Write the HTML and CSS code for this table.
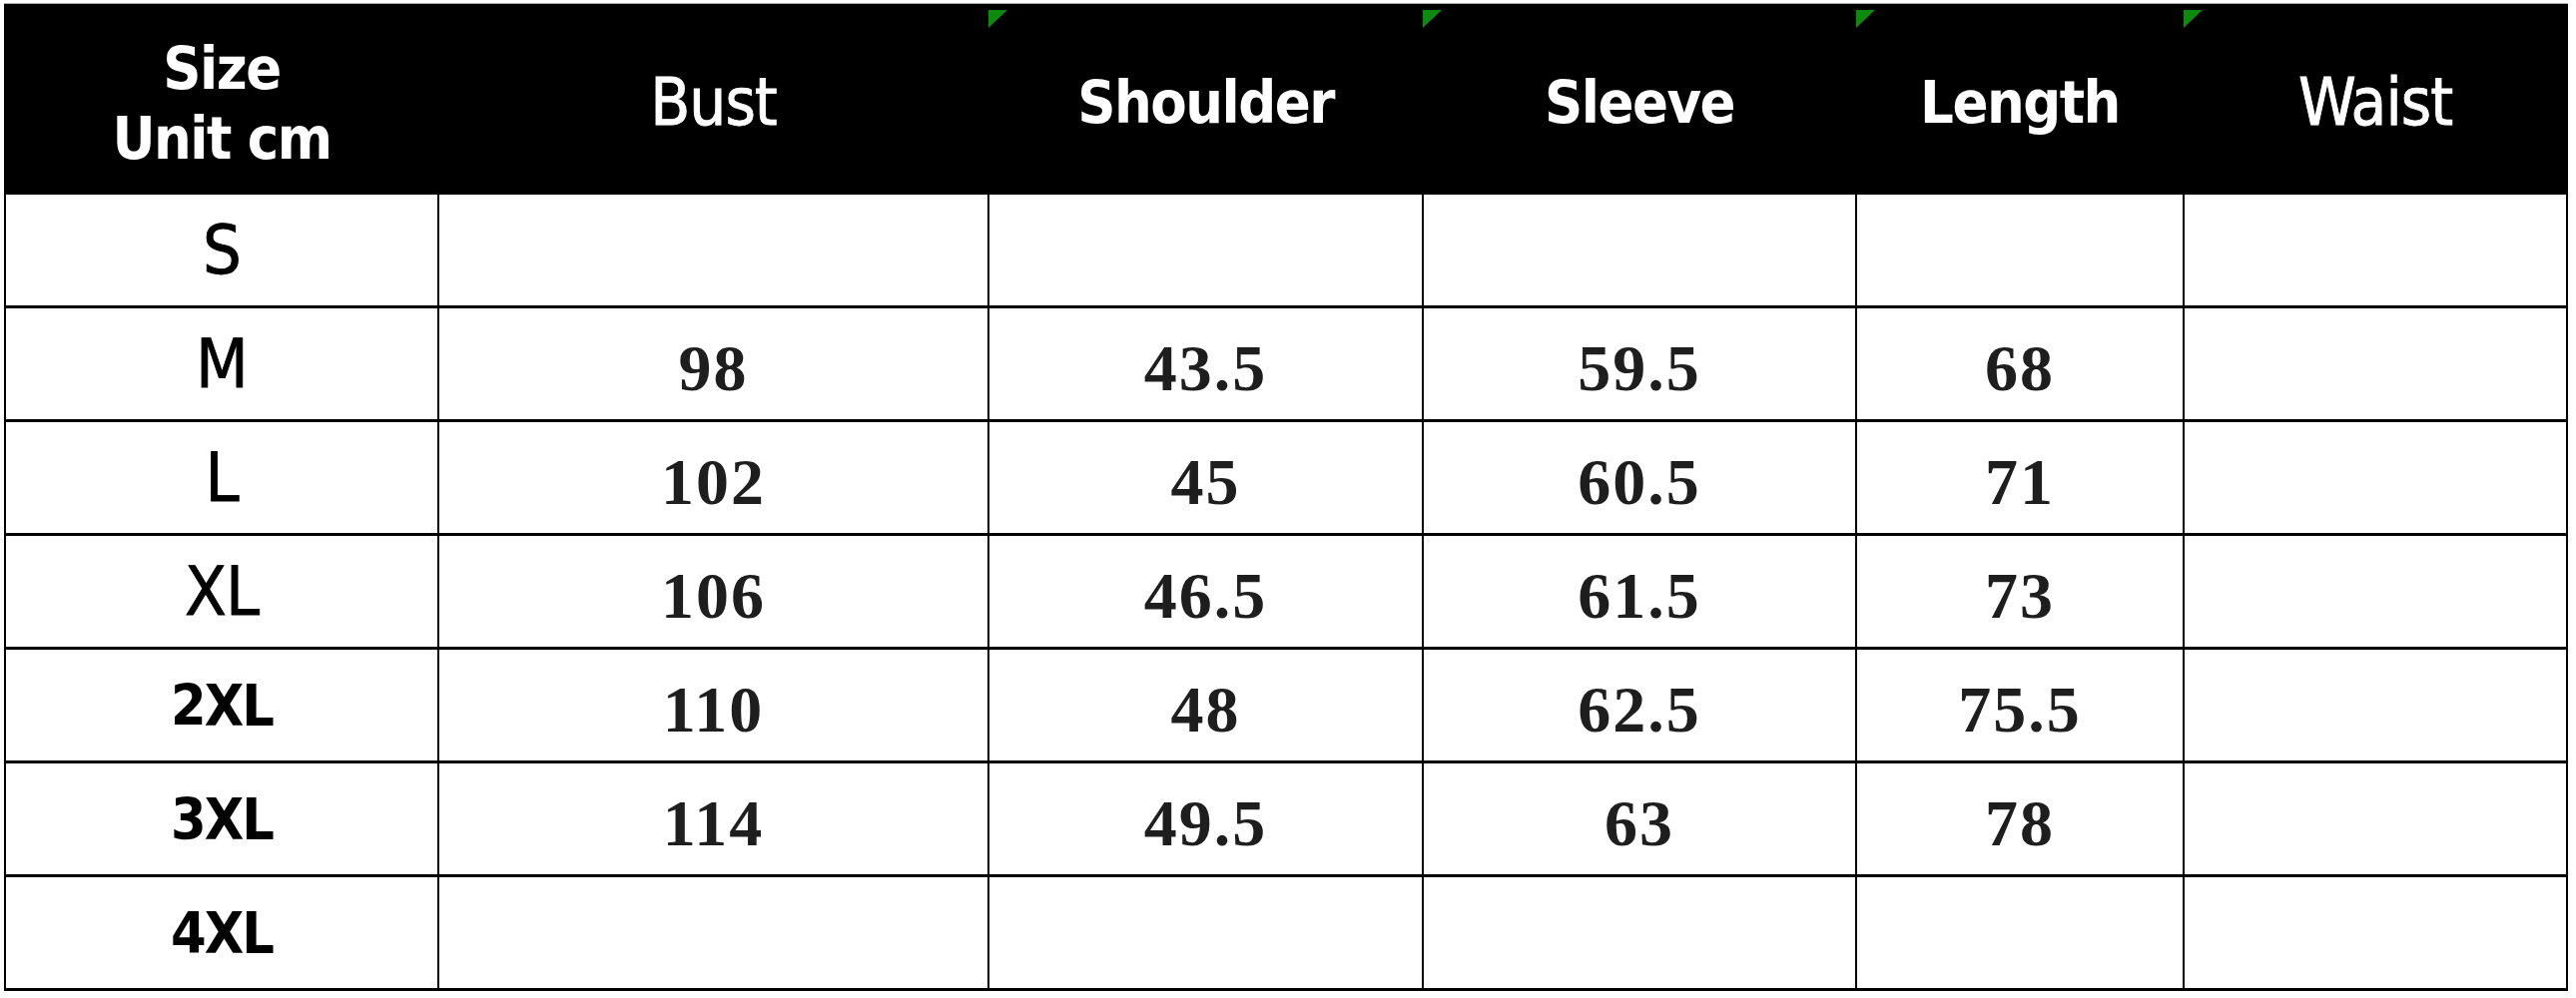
FILE: index.html
```html
<!DOCTYPE html>
<html lang="en">
<head>
<meta charset="utf-8">
<title>Size chart</title>
<link rel="stylesheet" href="styles.css">
</head>
<body>
<div class="sheet">
  <div class="chart">
    <div class="hd bold two"><span>Size</span><span>Unit cm</span></div>
    <div class="hd reg">Bust</div>
    <div class="hd bold flag">Shoulder</div>
    <div class="hd bold flag">Sleeve</div>
    <div class="hd bold flag">Length</div>
    <div class="hd reg flag">Waist</div>

    <div class="sz">S</div><div class="num"></div><div class="num"></div><div class="num"></div><div class="num"></div><div class="num"></div>
    <div class="sz">M</div><div class="num">98</div><div class="num">43.5</div><div class="num">59.5</div><div class="num">68</div><div class="num"></div>
    <div class="sz">L</div><div class="num">102</div><div class="num">45</div><div class="num">60.5</div><div class="num">71</div><div class="num"></div>
    <div class="sz">XL</div><div class="num">106</div><div class="num">46.5</div><div class="num">61.5</div><div class="num">73</div><div class="num"></div>
    <div class="sz b">2XL</div><div class="num">110</div><div class="num">48</div><div class="num">62.5</div><div class="num">75.5</div><div class="num"></div>
    <div class="sz b">3XL</div><div class="num">114</div><div class="num">49.5</div><div class="num">63</div><div class="num">78</div><div class="num"></div>
    <div class="sz b">4XL</div><div class="num"></div><div class="num"></div><div class="num"></div><div class="num"></div><div class="num"></div>
  </div>
</div>
</body>
</html>
```
FILE: styles.css
```css
html, body {
  margin: 0;
  padding: 0;
  background: #ffffff;
}

.sheet {
  width: 2580px;
  height: 1000px;
  padding-top: 3px;
  box-sizing: border-box;
  background: #ffffff;
}

.chart {
  margin-left: 4px;
  width: 2568px;
  box-sizing: border-box;
  border-top: 1px solid #a8a8a8;
  display: grid;
  grid-template-columns: 432px 549px 433px 432px 326px 382px;
  grid-template-rows: 188px repeat(7, 111px);
  column-gap: 2px;
  row-gap: 3px;
  padding: 0 2px 3px 2px;
  background: #000000;
}

.hd {
  background: #000000;
  color: #ffffff;
  display: flex;
  flex-direction: column;
  align-items: center;
  justify-content: center;
  position: relative;
  font-family: "DejaVu Sans Condensed", "DejaVu Sans", sans-serif;
  font-stretch: condensed;
  padding-top: 8px;
  box-sizing: border-box;
}

.hd.bold {
  font-weight: bold;
  font-size: 59px;
  letter-spacing: -1.5px;
}

.hd.reg {
  font-weight: normal;
  font-size: 65px;
  letter-spacing: -1px;
  -webkit-text-stroke: 0.8px #ffffff;
}

.hd.two {
  line-height: 70px;
  padding-top: 12px;
}

.hd.flag::before {
  content: "";
  position: absolute;
  left: -1px;
  top: 6px;
  width: 0;
  height: 0;
  border-top: 18px solid #0b8a0b;
  border-right: 19px solid transparent;
}

.sz {
  background: #ffffff;
  color: #000000;
  display: flex;
  align-items: center;
  justify-content: center;
  font-family: "DejaVu Sans Condensed", "DejaVu Sans", sans-serif;
  font-stretch: condensed;
  font-size: 68px;
  letter-spacing: -1px;
  -webkit-text-stroke: 0.8px #000000;
}

.sz.b {
  font-weight: bold;
  font-size: 57px;
  letter-spacing: -2px;
  -webkit-text-stroke: 0;
}

.num {
  background: #ffffff;
  color: #1e1e1e;
  display: flex;
  align-items: center;
  justify-content: center;
  padding-top: 8px;
  box-sizing: border-box;
  font-family: "Liberation Serif", "Times New Roman", serif;
  font-weight: bold;
  font-size: 66px;
  letter-spacing: 2px;
}
```
